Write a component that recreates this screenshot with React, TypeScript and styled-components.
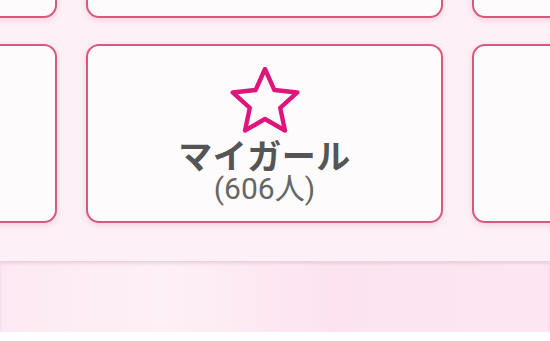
import React from "react";
import styled, { createGlobalStyle } from "styled-components";

const Global = createGlobalStyle`
  html, body { margin: 0; padding: 0; }
  body {
    width: 550px;
    height: 341px;
    overflow: hidden;
    background: #ffffff;
    font-family: "Noto Sans CJK JP", "Noto Sans", sans-serif;
  }
`;

const Page = styled.div`
  width: 550px;
  height: 341px;
  display: flex;
  flex-direction: column;
  overflow: hidden;
`;

const GridArea = styled.div`
  height: 261px;
  background: #fdf1f7;
  overflow: hidden;
  flex-shrink: 0;
`;

const Grid = styled.div`
  display: grid;
  grid-template-columns: repeat(3, 357px);
  grid-auto-rows: 179px;
  column-gap: 29px;
  row-gap: 26px;
  margin-left: -300px;
  margin-top: -161px;
`;

const Card = styled.div`
  box-sizing: border-box;
  border: 2.5px solid #da587e;
  border-radius: 13px;
  background: #fefbfd;
  box-shadow: 0 2px 6px rgba(200, 120, 150, 0.25);
  display: flex;
  flex-direction: column;
  align-items: center;
  padding-top: 21px;
`;

const Title = styled.div`
  margin-top: 5px;
  font-size: 34px;
  font-weight: 700;
  line-height: 34px;
  color: #555555;
  letter-spacing: 0.5px;
`;

const Count = styled.div`
  font-family: "Roboto", "Noto Sans CJK JP", sans-serif;
  font-size: 30px;
  line-height: 30px;
  color: #666666;
  margin-top: 2px;
`;

const Band = styled.div`
  height: 71px;
  flex-shrink: 0;
  background: linear-gradient(90deg, #fde9f3 0%, #fdf0f6 30%, #fde3f0 60%, #fde6f2 100%);
  border-top: 1px solid #e9d3dd;
  box-shadow: inset 0 2px 3px rgba(190, 150, 170, 0.25);
  box-sizing: border-box;
`;

const Bottom = styled.div`
  flex: 1;
  background: #ffffff;
`;

function starPoints(cx: number, cy: number, R: number, r: number) {
  const pts: string[] = [];
  for (let i = 0; i < 10; i++) {
    const rad = i % 2 === 0 ? R : r;
    const a = -Math.PI / 2 + (i * Math.PI) / 5;
    pts.push(`${(cx + rad * Math.cos(a)).toFixed(2)},${(cy + rad * Math.sin(a)).toFixed(2)}`);
  }
  return pts.join(" ");
}

const Star = () => (
  <svg width="70" height="66" viewBox="0 0 70 66">
    <polygon
      points={starPoints(35, 36, 34, 16)}
      fill="none"
      stroke="#e0157c"
      strokeWidth="4.4"
      strokeLinejoin="round"
    />
  </svg>
);

export default function App() {
  return (
    <Page>
      <Global />
      <GridArea>
        <Grid>
          <Card />
          <Card />
          <Card />
          <Card />
          <Card>
            <Star />
            <Title>マイガール</Title>
            <Count>(606人)</Count>
          </Card>
          <Card />
        </Grid>
      </GridArea>
      <Band />
      <Bottom />
    </Page>
  );
}
